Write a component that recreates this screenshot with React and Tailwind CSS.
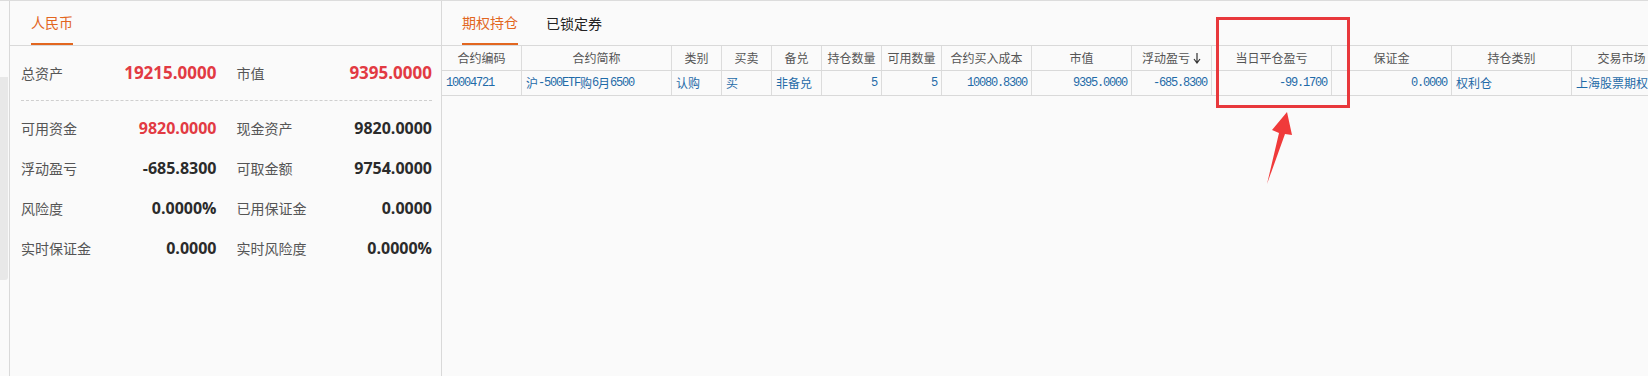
import React from 'react';

const cols = [
  { title: '合约编码', w: 80, align: 'left' },
  { title: '合约简称', w: 150, align: 'left' },
  { title: '类别', w: 50, align: 'left' },
  { title: '买卖', w: 50, align: 'left' },
  { title: '备兑', w: 50, align: 'left' },
  { title: '持仓数量', w: 60, align: 'right' },
  { title: '可用数量', w: 60, align: 'right' },
  { title: '合约买入成本', w: 90, align: 'right' },
  { title: '市值', w: 100, align: 'right' },
  { title: '浮动盈亏', w: 80, align: 'right', sort: true },
  { title: '当日平仓盈亏', w: 120, align: 'right' },
  { title: '保证金', w: 120, align: 'right' },
  { title: '持仓类别', w: 120, align: 'left' },
  { title: '交易市场', w: 100, align: 'left' },
];

// each cell: array of [text, isNumeric]
const row = [
  [['10004721', true]],
  [['沪', false], ['-500ETF', true], ['购', false], ['6', true], ['月', false], ['6500', true]],
  [['认购', false]],
  [['买', false]],
  [['非备兑', false]],
  [['5', true]],
  [['5', true]],
  [['10080.8300', true]],
  [['9395.0000', true]],
  [['-685.8300', true]],
  [['-99.1700', true]],
  [['0.0000', true]],
  [['权利仓', false]],
  [['上海股票期权', false]],
];

const summary = [
  ['可用资金', '9820.0000', true, '现金资产', '9820.0000', false],
  ['浮动盈亏', '-685.8300', false, '可取金额', '9754.0000', false],
  ['风险度', '0.0000%', false, '已用保证金', '0.0000', false],
  ['实时保证金', '0.0000', false, '实时风险度', '0.0000%', false],
];

const Value = ({ text, red, big }) => (
  <span
    className={`font-['Open_Sans'] font-bold ${big ? 'text-[17px]' : 'text-[16px]'} ${
      red ? 'text-[#e23a43]' : 'text-[#2b2b2b]'
    }`}
  >
    {text}
  </span>
);

const Label = ({ children }) => <span className="text-[14px] text-[#555]">{children}</span>;

export default function App() {
  return (
    <div className="relative flex w-[1648px] h-[376px] overflow-hidden bg-[#fafafa] border-t border-[#dcdcdc] font-['Noto_Sans_CJK_SC','Noto_Sans',sans-serif]">
      {/* scrollbar */}
      <div className="w-[9px] shrink-0 pt-[76px]">
        <div className="w-[8px] h-[203px] bg-[#e8e8e8] rounded-br-[3px]" />
      </div>

      {/* left account panel */}
      <div className="w-[433px] shrink-0 border-x border-[#d9d9d9]">
        <div className="h-[45px] border-b border-[#d9d9d9] pl-[21px] flex">
          <div className="h-[44px] flex items-center border-b-2 border-[#e2661f] text-[14px] text-[#e2661f]">人民币</div>
        </div>
        <div className="pl-[11px] pr-[9px]">
          <div className="h-[55px] grid grid-cols-2 gap-x-[20px] items-center border-b border-dashed border-[#cfcfcf]">
            <div className="flex items-center justify-between">
              <Label>总资产</Label>
              <Value text="19215.0000" red big />
            </div>
            <div className="flex items-center justify-between">
              <Label>市值</Label>
              <Value text="9395.0000" red big />
            </div>
          </div>
          <div className="pt-[7px]">
            {summary.map(([l1, v1, r1, l2, v2, r2]) => (
              <div key={l1} className="h-[40px] grid grid-cols-2 gap-x-[20px] items-center">
                <div className="flex items-center justify-between">
                  <Label>{l1}</Label>
                  <Value text={v1} red={r1} />
                </div>
                <div className="flex items-center justify-between">
                  <Label>{l2}</Label>
                  <Value text={v2} red={r2} />
                </div>
              </div>
            ))}
          </div>
        </div>
      </div>

      {/* right positions panel */}
      <div className="flex-1 min-w-0">
        <div className="h-[45px] border-b border-[#d9d9d9] pl-[20px] flex gap-[28px]">
          <div className="h-[44px] flex items-center border-b-2 border-[#e2661f] text-[14px] text-[#e2661f]">期权持仓</div>
          <div className="h-[44px] flex items-center text-[14px] text-[#222]">已锁定券</div>
        </div>
        <div className="flex h-[25px] border-b border-[#d9d9d9]">
          {cols.map((c) => (
            <div
              key={c.title}
              style={{ width: c.w }}
              className="shrink-0 border-r border-[#dcdcdc] flex items-center justify-center text-[12px] text-[#555] whitespace-nowrap"
            >
              {c.title}
              {c.sort && (
                <svg width="8" height="12" viewBox="0 0 8 12" className="ml-[3px]">
                  <path d="M4 1v9M1 7l3 4 3-4" fill="none" stroke="#333" strokeWidth="1.2" />
                </svg>
              )}
            </div>
          ))}
        </div>
        <div className="flex h-[25px] border-b border-[#d9d9d9]">
          {cols.map((c, i) => (
            <div
              key={c.title}
              style={{ width: c.w }}
              className={`shrink-0 border-r border-[#dcdcdc] flex items-center px-[4px] text-[12px] text-[#1f6aa8] whitespace-nowrap ${
                c.align === 'right' ? 'justify-end' : 'justify-start'
              }`}
            >
              {row[i].map(([t, num], k) =>
                num ? (
                  <span key={k} className="font-['Liberation_Mono'] tracking-[-1.2px]">
                    {t}
                  </span>
                ) : (
                  <span key={k}>{t}</span>
                )
              )}
            </div>
          ))}
        </div>
      </div>

      {/* annotation overlay */}
      <div className="absolute left-[1216px] top-[16px] w-[134px] h-[91px] border-[3px] border-[#e8383c]" />
      <svg className="absolute left-[1262px] top-[108px]" width="35" height="80" viewBox="0 0 35 80">
        <polygon points="5,75 17,24 10,21 25,3 30,26 23,25" fill="#f03a3a" />
      </svg>
    </div>
  );
}
